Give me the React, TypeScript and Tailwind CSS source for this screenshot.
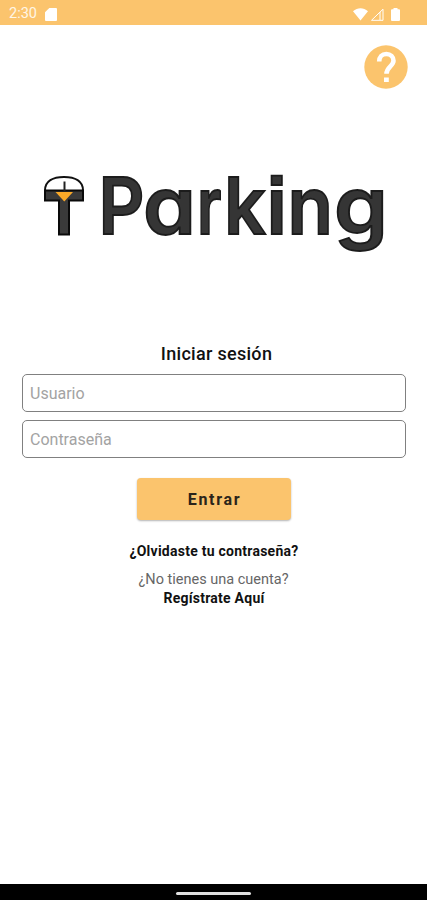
import { useState } from 'react';

// x and width of each letter in the wordmark
const LETTERS = [
  { char: 'P', x: 98.5, width: 46 },
  { char: 'a', x: 143, width: 53 },
  { char: 'r', x: 197, width: 24.5 },
  { char: 'k', x: 224, width: 42 },
  { char: 'i', x: 266.5, width: 20.5 },
  { char: 'n', x: 287.5, width: 45.5 },
  { char: 'g', x: 334, width: 54 },
];

function StatusBar() {
  return (
    <header className="flex h-[25px] shrink-0 items-center justify-between bg-[#fbc46d] pl-[9px] pr-[27px] pt-[3px] text-white">
      <div className="flex items-center gap-[8px]">
        <span className="text-[14.5px] leading-none text-[#fff6e6]">2:30</span>
        <svg width="12" height="13" viewBox="0 0 12 13" fill="currentColor">
          <path d="M4.3 0H11a1 1 0 0 1 1 1v11a1 1 0 0 1-1 1H1a1 1 0 0 1-1-1V4.3z" />
        </svg>
      </div>
      <svg width="47" height="13" viewBox="0 0 47 13" fill="currentColor">
        {/* wifi, empty signal, battery */}
        <path d="M0 3.2C4.5-.9 10.500-.9 15 3.200L7.500 12.500z" />
        <path d="M30 1.200V12.300H18.500z" fill="none" stroke="currentColor" strokeWidth="1" />
        <path d="M27 4v8" fill="none" stroke="currentColor" strokeWidth="1" />
        <path d="M40.500 0h4v1.200H46a1 1 0 0 1 1 1V12a1 1 0 0 1-1 1h-7a1 1 0 0 1-1-1V2.200a1 1 0 0 1 1-1h1.500z" />
      </svg>
    </header>
  );
}

function Logo() {
  return (
    <svg width="427" height="115" viewBox="0 150 427 115" role="img" aria-label="Parking">
      <path d="M45 190.500C45 181 53 177 64 177s19 4 19 13.500" fill="white" stroke="#111" strokeWidth="2" />
      <path d="M45 190.500H83V200.500H69V234.500H59V200.500H45z" fill="#3a3a3a" stroke="#0a0a0a" strokeWidth="2" />
      <path d="M64.500 181.500V192" stroke="#222" strokeWidth="2" />
      <path d="M55.500 192H73L64.300 201.500z" fill="#faa928" />
      <text
        y="234"
        className="font-['Inter'] text-[79px] font-semibold [font-feature-settings:'cv11','ss07']"
        fill="#353535"
        stroke="#1c1c1c"
        strokeWidth="1.8"
      >
        {LETTERS.map(({ char, x, width }) => (
          <tspan key={char} x={x} textLength={width} lengthAdjust="spacingAndGlyphs">
            {char}
          </tspan>
        ))}
      </text>
    </svg>
  );
}

export default function App() {
  const [user, setUser] = useState('');
  const [password, setPassword] = useState('');

  const inputClass =
    'h-[38px] w-full rounded-[5px] border border-[#808080] bg-white px-[7px] text-[16px] text-[#222] outline-none placeholder:text-[#a3a3a3]';

  return (
    <div className="flex h-[900px] w-full flex-col bg-white font-['Roboto','Liberation_Sans',sans-serif]">
      <StatusBar />

      <main className="flex flex-1 flex-col items-center">
        <button type="button" className="mr-[19px] mt-[20px] self-end" aria-label="Ayuda">
          <svg width="44" height="44" viewBox="0 0 44 44">
            <circle cx="22" cy="22" r="21.700" fill="#fbc46d" />
            <path
              d="M15.200 16.500C15.200 12 18 9 22.300 9s7.200 2.800 7.200 6.800c0 5.200-7 6.200-7 13"
              fill="none"
              stroke="white"
              strokeWidth="4.600"
            />
            <rect x="20" y="32.500" width="4.800" height="4.500" fill="white" />
          </svg>
        </button>

        <div className="mt-[61px]">
          <Logo />
        </div>

        <form className="flex w-full flex-col items-center px-[21px] pt-[78px]" onSubmit={(e) => e.preventDefault()}>
          <h1 className="pl-[6px] text-[18px] font-medium leading-[22px] tracking-[0.3px] text-[#111]">Iniciar sesión</h1>
          <div className="mt-[9px] flex w-full flex-col gap-[8px] pl-[1px]">
            <input className={inputClass} placeholder="Usuario" value={user} onChange={(e) => setUser(e.target.value)} />
            <input
              className={inputClass}
              type="password"
              placeholder="Contraseña"
              value={password}
              onChange={(e) => setPassword(e.target.value)}
            />
          </div>
          <button
            type="submit"
            className="mt-[20px] h-[42px] w-[154px] rounded-[4px] bg-[#fbc46d] pl-[2px] pt-[2px] text-[16px] font-bold tracking-[1.7px] text-[#2b241a] shadow-[0_1px_2px_rgba(0,0,0,0.3)]"
          >
            Entrar
          </button>
        </form>

        <a className="mt-[21px] pl-[1px] text-[14px] font-bold leading-[20px] tracking-[0.25px] text-[#111]">
          ¿Olvidaste tu contraseña?
        </a>
        <p className="mt-[10px] text-[14.500px] leading-[18px] text-[#666]">¿No tienes una cuenta?</p>
        <a className="-mt-[1px] pl-[1px] text-[14px] font-bold leading-[20px] tracking-[0.25px] text-[#111]">Regístrate Aquí</a>
      </main>

      <footer className="flex h-[16px] shrink-0 items-center justify-center bg-black pt-[2px]">
        <div className="h-[3px] w-[75px] rounded-full bg-[#e0e0e0]" />
      </footer>
    </div>
  );
}
